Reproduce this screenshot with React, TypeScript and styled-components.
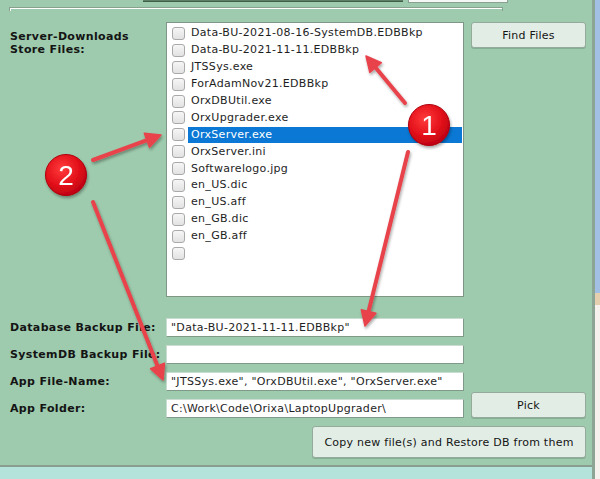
import React from "react";
import styled, { createGlobalStyle } from "styled-components";

const GlobalStyle = createGlobalStyle`
  html, body { margin: 0; padding: 0; }
  body {
    width: 600px;
    height: 479px;
    overflow: hidden;
    font-family: "DejaVu Sans", Verdana, sans-serif;
  }
`;

const Page = styled.div`
  position: relative;
  display: flex;
  width: 600px;
  height: 479px;
  overflow: hidden;
`;

const Panel = styled.div`
  display: flex;
  flex-direction: column;
  width: 592px;
  border-right: 3px solid #8da595;
`;

const Main = styled.div`
  height: 465px;
  background: #9ecbad;
  border-bottom: 2px solid #8a9d91;
  display: flex;
  flex-direction: column;
`;

const Footer = styled.div`
  flex: 1;
  background: #b4e3dc;
`;

const SideStrip = styled.div`
  flex: 1;
  display: flex;
  flex-direction: column;
`;

const SideBlock = styled.div<{ $h?: number; $c: string }>`
  height: ${(p) => (p.$h ? `${p.$h}px` : "auto")};
  flex: ${(p) => (p.$h ? "none" : "1")};
  background: ${(p) => p.$c};
`;

const TopStrip = styled.div`
  display: flex;
  height: 3px;
  padding-left: 143px;
  gap: 5px;
`;

const DarkEdge = styled.div`
  width: 260px;
  height: 1px;
  background: #5d7f67;
  border-bottom: 1px solid #3f5f49;
`;

const LightEdge = styled.div`
  width: 98px;
  height: 2px;
  background: #f4f8f5;
  border: 1px solid #8c9f93;
  border-top: none;
`;

const GroupLine = styled.div`
  margin: 4px 0 0 9px;
  width: 492px;
  height: 3px;
  border: 1px solid #87a08f;
  border-bottom: none;
  box-shadow: inset 1px 1px 0 #ffffff;
`;

const Form = styled.div`
  margin-top: 11px;
  padding-left: 10px;
  display: grid;
  grid-template-columns: 149px 298px 115px;
  grid-template-rows: 288px repeat(4, 19px) 32px;
  column-gap: 7px;
  row-gap: 8px;
`;

const Label = styled.div<{ $top?: boolean }>`
  font-weight: bold;
  font-size: 11px;
  letter-spacing: 0.35px;
  line-height: 13px;
  color: #141414;
  align-self: ${(p) => (p.$top ? "start" : "center")};
  padding-top: ${(p) => (p.$top ? "8px" : "0")};
  white-space: nowrap;
`;

const ListBox = styled.div`
  height: 275px;
  box-sizing: border-box;
  align-self: start;
  background: #ffffff;
  border: 1px solid #7f9686;
  padding-top: 2px;
  overflow: hidden;
`;

const ListRow = styled.div`
  display: flex;
  align-items: center;
  height: 16.9px;
  padding-left: 5px;
`;

const Check = styled.span`
  width: 13px;
  height: 13px;
  box-sizing: border-box;
  border: 1px solid #a9a9a9;
  border-radius: 3px;
  background: linear-gradient(#f6f6f6, #e2e2e2);
  flex: none;
`;

const ItemText = styled.span<{ $sel?: boolean }>`
  margin-left: 3px;
  flex: 1;
  height: 16px;
  line-height: 16px;
  padding-left: 3px;
  margin-right: 1px;
  font-size: 11px;
  letter-spacing: 0.3px;
  color: ${(p) => (p.$sel ? "#ffffff" : "#1e1e1e")};
  background: ${(p) => (p.$sel ? "#0a78d4" : "transparent")};
  white-space: nowrap;
`;

const Button = styled.button<{ $span?: boolean; $tall?: boolean }>`
  font-family: "DejaVu Sans", Verdana, sans-serif;
  font-size: 11px;
  letter-spacing: 0.25px;
  color: #141414;
  background: #e2ede6;
  border: 1px solid #94aa9b;
  border-radius: 3px;
  box-shadow: 0 1px 0 rgba(60, 90, 70, 0.25);
  padding: 0;
  height: ${(p) => (p.$span ? "32px" : "26px")};
  align-self: start;
  margin-top: ${(p) => (p.$tall ? "-7px" : "0")};
  grid-column: ${(p) => (p.$span ? "2 / span 2" : "auto")};
  justify-self: ${(p) => (p.$span ? "end" : "stretch")};
  width: ${(p) => (p.$span ? "274px" : "auto")};
`;

const Field = styled.div`
  box-sizing: border-box;
  height: 19px;
  background: #ffffff;
  border: 1px solid;
  border-color: #c9dccf #7f9a88 #7f9a88 #c9dccf;
  font-size: 11px;
  letter-spacing: 0.3px;
  line-height: 17px;
  padding-left: 4px;
  color: #1e1e1e;
  white-space: nowrap;
  overflow: hidden;
`;

const Overlay = styled.svg`
  position: absolute;
  left: 0;
  top: 0;
  pointer-events: none;
`;

const files = [
  "Data-BU-2021-08-16-SystemDB.EDBBkp",
  "Data-BU-2021-11-11.EDBBkp",
  "JTSSys.exe",
  "ForAdamNov21.EDBBkp",
  "OrxDBUtil.exe",
  "OrxUpgrader.exe",
  "OrxServer.exe",
  "OrxServer.ini",
  "Softwarelogo.jpg",
  "en_US.dic",
  "en_US.aff",
  "en_GB.dic",
  "en_GB.aff",
  "",
];

type Pt = [number, number];

function Arrow({ from, to }: { from: Pt; to: Pt }) {
  const dx = to[0] - from[0];
  const dy = to[1] - from[1];
  const len = Math.hypot(dx, dy);
  const ux = dx / len;
  const uy = dy / len;
  const L = 15;
  const W = 7.5;
  const bx = to[0] - ux * L;
  const by = to[1] - uy * L;
  const nx = -uy;
  const ny = ux;
  const pts = `${to[0]},${to[1]} ${bx + nx * W},${by + ny * W} ${bx - nx * W},${by - ny * W}`;
  return (
    <g filter="url(#shadow)">
      <line
        x1={from[0]}
        y1={from[1]}
        x2={bx + ux * 3}
        y2={by + uy * 3}
        stroke="#e8434c"
        strokeWidth={4}
        strokeLinecap="round"
      />
      <polygon points={pts} fill="#e8434c" stroke="#e8434c" strokeWidth={1.5} strokeLinejoin="round" />
    </g>
  );
}

function Badge({ cx, cy, n }: { cx: number; cy: number; n: string }) {
  return (
    <g filter="url(#shadow)">
      <circle cx={cx} cy={cy} r={20.5} fill="url(#badge)" stroke="#b0000c" strokeWidth={1} />
      <text
        x={cx}
        y={cy + 10}
        textAnchor="middle"
        fontFamily="'Liberation Sans', Arial, sans-serif"
        fontSize="28"
        fill="#ffffff"
      >
        {n}
      </text>
    </g>
  );
}

export default function App() {
  return (
    <Page>
      <GlobalStyle />
      <Panel>
        <Main>
          <TopStrip>
            <DarkEdge />
            <LightEdge />
          </TopStrip>
          <GroupLine />
          <Form>
            <Label $top>
              Server-Downloads
              <br />
              Store Files:
            </Label>
            <ListBox>
              {files.map((f, i) => (
                <ListRow key={i}>
                  <Check />
                  <ItemText $sel={f === "OrxServer.exe"}>{f}</ItemText>
                </ListRow>
              ))}
            </ListBox>
            <Button>Find Files</Button>

            <Label>Database Backup File:</Label>
            <Field>"Data-BU-2021-11-11.EDBBkp"</Field>
            <span />

            <Label>SystemDB Backup File:</Label>
            <Field />
            <span />

            <Label>App File-Name:</Label>
            <Field>"JTSSys.exe", "OrxDBUtil.exe", "OrxServer.exe"</Field>
            <span />

            <Label>App Folder:</Label>
            <Field>C:\Work\Code\Orixa\LaptopUpgrader\</Field>
            <Button $tall>Pick</Button>

            <Button $span>Copy new file(s) and Restore DB from them</Button>
          </Form>
        </Main>
        <Footer />
      </Panel>
      <SideStrip>
        <SideBlock $h={293} $c="#a2c0e4" />
        <SideBlock $h={12} $c="#e6cfae" />
        <SideBlock $c="#f6f1ec" />
      </SideStrip>
      <Overlay width={600} height={479} viewBox="0 0 600 479">
        <defs>
          <filter id="shadow" x="-30%" y="-30%" width="160%" height="160%">
            <feDropShadow dx="1" dy="2" stdDeviation="1.6" floodColor="#000" floodOpacity="0.35" />
          </filter>
          <radialGradient id="badge" cx="40%" cy="35%" r="70%">
            <stop offset="0%" stopColor="#ff3b3b" />
            <stop offset="60%" stopColor="#e2101a" />
            <stop offset="100%" stopColor="#b80010" />
          </radialGradient>
        </defs>
        <Arrow from={[405, 103]} to={[366, 56]} />
        <Arrow from={[408, 152]} to={[365, 326]} />
        <Arrow from={[93, 160]} to={[161, 135]} />
        <Arrow from={[93, 202]} to={[163, 380]} />
        <Badge cx={429} cy={125} n="1" />
        <Badge cx={66} cy={175} n="2" />
      </Overlay>
    </Page>
  );
}
